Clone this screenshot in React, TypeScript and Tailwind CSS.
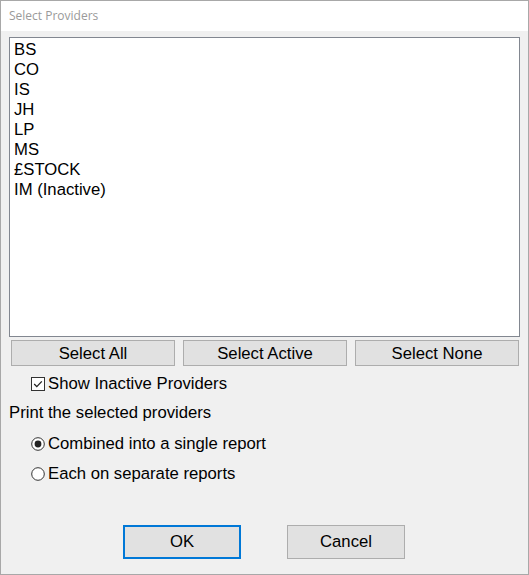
export default function App() {
  const providers = ["BS", "CO", "IS", "JH", "LP", "MS", "£STOCK", "IM (Inactive)"];

  return (
    <div className="w-[529px] h-[575px] border border-[#a8a8a8] bg-[#f0f0f0] flex flex-col font-['Liberation_Sans',Arial,sans-serif] text-black text-[16.7px]">
      <div className="h-[30px] bg-white flex items-center pl-[8px] font-['Open_Sans',sans-serif] text-[12px] text-[#9a9a9a]">
        Select Providers
      </div>

      <div className="flex flex-col px-[8px] pt-[6px]">
        <div className="h-[300px] border border-[#828790] bg-white pt-[2px] pl-[4px]">
          {providers.map((p) => (
            <div key={p} className="h-[20px] leading-[20px]">
              {p}
            </div>
          ))}
        </div>

        <div className="flex gap-[8px] mt-[3px] ml-[2px] mr-[1px]">
          {["Select All", "Select Active", "Select None"].map((b) => (
            <button
              key={b}
              className="w-[164px] h-[26px] pt-[2px] bg-[#e1e1e1] border border-[#adadad] leading-none"
            >
              {b}
            </button>
          ))}
        </div>

        <label className="flex items-center h-[20px] mt-[8px] ml-[22px] gap-[3px]">
          <svg width="14" height="14" viewBox="0 0 14 14" className="shrink-0">
            <rect x="0.5" y="0.5" width="13" height="13" fill="white" stroke="#333" />
            <path d="M3.2 7 L5.8 9.6 L10.8 4.4" fill="none" stroke="#222" strokeWidth="1.3" />
          </svg>
          Show Inactive Providers
        </label>

        <div className="h-[20px] leading-[20px] mt-[9px]">Print the selected providers</div>

        <label className="flex items-center h-[20px] mt-[11px] ml-[22px] gap-[3px]">
          <svg width="14" height="14" viewBox="0 0 14 14" className="shrink-0">
            <circle cx="7" cy="7" r="6.3" fill="white" stroke="#333" />
            <circle cx="7" cy="7" r="3.4" fill="#222" />
          </svg>
          Combined into a single report
        </label>

        <label className="flex items-center h-[20px] mt-[10px] ml-[22px] gap-[3px]">
          <svg width="14" height="14" viewBox="0 0 14 14" className="shrink-0">
            <circle cx="7" cy="7" r="6.3" fill="white" stroke="#333" />
          </svg>
          Each on separate reports
        </label>

        <div className="flex mt-[41px] ml-[114px] gap-[46px]">
          <button className="w-[118px] h-[34px] bg-[#e1e1e1] border-2 border-[#0078d7]">OK</button>
          <button className="w-[118px] h-[34px] bg-[#e1e1e1] border border-[#adadad]">Cancel</button>
        </div>
      </div>
    </div>
  );
}
